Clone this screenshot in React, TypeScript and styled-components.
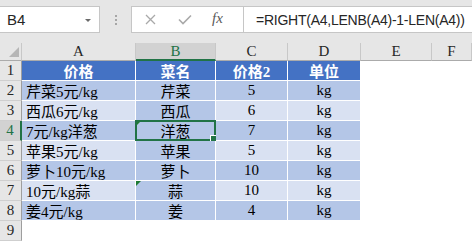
import React from "react";
import styled, { createGlobalStyle } from "styled-components";

const GREEN = "#217346";
const BLUE = "#4472c4";
const DARK = "#b4c6e7";
const LIGHT = "#d9e1f2";
const CELL_FONT = `"Liberation Serif", "Noto Sans CJK SC", serif`;

const GlobalStyle = createGlobalStyle`
  html, body {
    margin: 0;
    padding: 0;
    background: #ffffff;
  }
  body {
    width: 472px;
    height: 242px;
    overflow: hidden;
  }
`;

const Page = styled.div`
  width: 472px;
  height: 242px;
  overflow: hidden;
  background: #ffffff;
`;

const Toolbar = styled.div`
  display: flex;
  align-items: flex-start;
  height: 43px;
  padding-top: 6px;
  box-sizing: border-box;
  background: #e6e6e6;
`;

const NameBox = styled.div`
  position: relative;
  display: flex;
  align-items: center;
  width: 100px;
  height: 27px;
  box-sizing: border-box;
  padding-left: 7px;
  background: #ffffff;
  border: 1px solid #c6c6c6;
  border-left: none;
  font-family: "Liberation Sans", sans-serif;
  font-size: 15px;
  color: #262626;
`;

const DropArrow = styled.span`
  position: absolute;
  right: 8px;
  top: 12px;
  width: 0;
  height: 0;
  border-left: 3px solid transparent;
  border-right: 3px solid transparent;
  border-top: 3px solid #6a6a6a;
`;

const Grip = styled.div`
  display: flex;
  flex-direction: column;
  gap: 2px;
  width: 31px;
  padding-top: 9px;
  align-items: center;
  span {
    width: 2px;
    height: 2px;
    background: #a6a6a6;
  }
`;

const ButtonBox = styled.div`
  display: flex;
  align-items: center;
  width: 113px;
  height: 27px;
  box-sizing: border-box;
  padding-left: 13px;
  gap: 22px;
  background: #ffffff;
  border: 1px solid #c6c6c6;
`;

const Fx = styled.span`
  font-family: "Liberation Serif", serif;
  font-style: italic;
  font-size: 15px;
  color: #5a5a5a;
  margin-left: -2px;
  margin-top: -3px;
`;

const FormulaBox = styled.div`
  flex: 1;
  display: flex;
  align-items: center;
  height: 27px;
  box-sizing: border-box;
  padding-left: 12px;
  background: #ffffff;
  border: 1px solid #c6c6c6;
  border-left: none;
  border-right: none;
  font-family: "Liberation Sans", sans-serif;
  font-size: 14px;
  letter-spacing: -0.25px;
  color: #262626;
  white-space: nowrap;
`;

const Sheet = styled.div`
  display: grid;
  grid-template-columns: 22px 114px 80px 72px 73px 71px 40px;
  grid-template-rows: 18px repeat(9, 20px);
`;

const Corner = styled.div`
  position: relative;
  background: #e6e6e6;
  border-right: 1px solid #c8c8c8;
  border-bottom: 1px solid #ababab;
  box-sizing: border-box;
  &::after {
    content: "";
    position: absolute;
    right: 2px;
    bottom: 3px;
    width: 0;
    height: 0;
    border-left: 10px solid transparent;
    border-bottom: 10px solid #b6b6b6;
  }
`;

const ColHead = styled.div<{ $active?: boolean }>`
  display: flex;
  align-items: center;
  justify-content: center;
  box-sizing: border-box;
  background: ${(p) => (p.$active ? "#d2d2d2" : "#e6e6e6")};
  color: ${(p) => (p.$active ? GREEN : "#262626")};
  border-right: 1px solid #c8c8c8;
  border-bottom: ${(p) => (p.$active ? `2px solid ${GREEN}` : "1px solid #ababab")};
  font-family: "Liberation Serif", serif;
  font-size: 15px;
  padding-top: ${(p) => (p.$active ? "1px" : "0")};
`;

const RowHead = styled.div<{ $active?: boolean }>`
  display: flex;
  align-items: center;
  justify-content: center;
  box-sizing: border-box;
  background: ${(p) => (p.$active ? "#d2d2d2" : "#e6e6e6")};
  color: ${(p) => (p.$active ? GREEN : "#262626")};
  border-bottom: 1px solid #cfcfcf;
  border-right: ${(p) => (p.$active ? `2px solid ${GREEN}` : "1px solid #9e9e9e")};
  font-family: "Liberation Serif", serif;
  font-size: 15px;
`;

const Cell = styled.div<{ $fill?: string; $align?: string; $bold?: boolean }>`
  position: relative;
  display: flex;
  align-items: center;
  justify-content: ${(p) => p.$align || "flex-start"};
  padding-left: ${(p) => (p.$align === "center" ? "0" : "4px")};
  box-sizing: border-box;
  background: ${(p) => p.$fill || "#ffffff"};
  border-right: ${(p) => (p.$fill ? "1px solid #ffffff" : "none")};
  border-bottom: ${(p) => (p.$fill ? "1px solid #ffffff" : "none")};
  color: ${(p) => (p.$fill === BLUE ? "#ffffff" : "#000000")};
  font-family: ${CELL_FONT};
  font-weight: ${(p) => (p.$bold ? 700 : 400)};
  font-size: 15px;
  white-space: nowrap;
`;

const ErrorMark = styled.span`
  position: absolute;
  top: 0;
  left: 0;
  width: 0;
  height: 0;
  border-top: 5px solid #1e7b34;
  border-right: 5px solid transparent;
`;

const Selection = styled.span`
  position: absolute;
  top: -1px;
  left: -1px;
  right: -1px;
  bottom: -1px;
  border: 2px solid ${GREEN};
  pointer-events: none;
`;

const Handle = styled.span`
  position: absolute;
  right: -4px;
  bottom: -4px;
  width: 6px;
  height: 6px;
  background: ${GREEN};
  border: 1px solid #ffffff;
`;

const columns = ["A", "B", "C", "D", "E", "F"];

const rows: string[][] = [
  ["价格", "菜名", "价格2", "单位"],
  ["芹菜5元/kg", "芹菜", "5", "kg"],
  ["西瓜6元/kg", "西瓜", "6", "kg"],
  ["7元/kg洋葱", "洋葱", "7", "kg"],
  ["苹果5元/kg", "苹果", "5", "kg"],
  ["萝卜10元/kg", "萝卜", "10", "kg"],
  ["10元/kg蒜", "蒜", "10", "kg"],
  ["姜4元/kg", "姜", "4", "kg"],
];

const fillFor = (row: number, col: number) => {
  if (row === 1) return BLUE;
  if (col === 1) return DARK;
  return row % 2 === 0 ? DARK : LIGHT;
};

const App = () => {
  return (
    <Page>
      <GlobalStyle />
      <Toolbar>
        <NameBox>
          B4
          <DropArrow />
        </NameBox>
        <Grip>
          <span />
          <span />
          <span />
        </Grip>
        <ButtonBox>
          <svg width="11" height="11" viewBox="0 0 11 11">
            <path d="M1 1 L10 10 M10 1 L1 10" stroke="#a9a9a9" strokeWidth="1.3" fill="none" />
          </svg>
          <svg width="14" height="11" viewBox="0 0 14 11">
            <path d="M1 5.5 L5 9.5 L13 1.5" stroke="#a9a9a9" strokeWidth="1.6" fill="none" />
          </svg>
          <Fx>fx</Fx>
        </ButtonBox>
        <FormulaBox>=RIGHT(A4,LENB(A4)-1-LEN(A4))</FormulaBox>
      </Toolbar>

      <Sheet>
        <Corner />
        {columns.map((c) => (
          <ColHead key={c} $active={c === "B"}>
            {c}
          </ColHead>
        ))}

        {Array.from({ length: 9 }, (_, i) => {
          const rowNo = i + 1;
          const data = rows[i];
          return (
            <React.Fragment key={rowNo}>
              <RowHead $active={rowNo === 4}>{rowNo}</RowHead>
              {columns.map((c, ci) => {
                if (!data || ci > 3) return <Cell key={c} />;
                return (
                  <Cell
                    key={c}
                    $fill={fillFor(rowNo, ci)}
                    $align={rowNo === 1 || ci > 0 ? "center" : undefined}
                    $bold={rowNo === 1}
                  >
                    {ci === 1 && (rowNo === 4 || rowNo === 7) && <ErrorMark />}
                    {data[ci]}
                    {ci === 1 && rowNo === 4 && (
                      <Selection>
                        <Handle />
                      </Selection>
                    )}
                  </Cell>
                );
              })}
            </React.Fragment>
          );
        })}
      </Sheet>
    </Page>
  );
};

export default App;
